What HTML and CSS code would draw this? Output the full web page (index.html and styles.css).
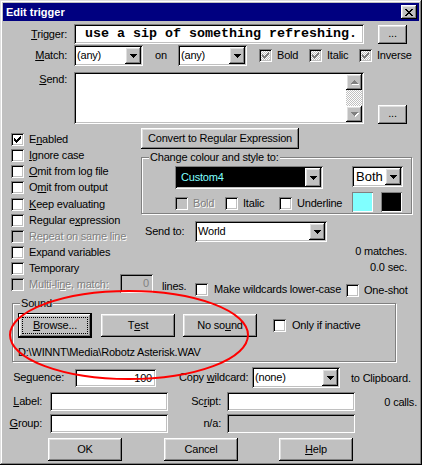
FILE: index.html
```html
<!DOCTYPE html>
<html>
<head>
<meta charset="utf-8">
<title>Edit trigger</title>
<link rel="stylesheet" href="styles.css">
</head>
<body>
<div class="win">
  <div class="titlebar">
    <span class="title">Edit trigger</span>
    <span class="closebtn raised"><svg width="8" height="7" viewBox="0 0 8 7" shape-rendering="crispEdges"><path d="M0 0h2v1h-2z M6 0h2v1h-2z M1 1h2v1h-2z M5 1h2v1h-2z M2 2h4v1h-4z M3 3h2v1h-2z M2 4h4v1h-4z M1 5h2v1h-2z M5 5h2v1h-2z M0 6h2v1h-2z M6 6h2v1h-2z" fill="#000"/></svg></span>
  </div>

  <div class="content">
    <div class="row r-trig">
      <span class="lbl lc67"><u>T</u>rigger:</span>
      <div class="field trig">use a sip of something refreshing.</div>
      <div class="btn raised dots">...</div>
    </div>

    <div class="row r-match">
      <span class="lbl lc67"><u>M</u>atch:</span>
      <div class="combo w69 ml7"><span class="ctext">(any)</span><span class="dd raised"><svg width="7" height="4" viewBox="0 0 7 4" shape-rendering="crispEdges"><path d="M0 0h7v1h-7z M1 1h5v1h-5z M2 2h3v1h-3z M3 3h1v1h-1z"/></svg></span></div>
      <span class="on">on</span>
      <div class="combo w69"><span class="ctext">(any)</span><span class="dd raised"><svg width="7" height="4" viewBox="0 0 7 4" shape-rendering="crispEdges"><path d="M0 0h7v1h-7z M1 1h5v1h-5z M2 2h3v1h-3z M3 3h1v1h-1z"/></svg></span></div>
      <span class="chk ck-bold"><span class="cb ind"><svg width="7" height="7" viewBox="0 0 7 7" shape-rendering="crispEdges"><path fill="#808080" d="M6 0h1v1h-1z M5 1h2v1h-2z M0 2h1v1h-1z M4 2h3v1h-3z M0 3h2v1h-2z M3 3h3v1h-3z M0 4h5v1h-5z M1 5h3v1h-3z M2 6h1v1h-1z"/></svg></span><span class="ct">Bold</span></span>
      <span class="chk ck-italic"><span class="cb ind"><svg width="7" height="7" viewBox="0 0 7 7" shape-rendering="crispEdges"><path fill="#808080" d="M6 0h1v1h-1z M5 1h2v1h-2z M0 2h1v1h-1z M4 2h3v1h-3z M0 3h2v1h-2z M3 3h3v1h-3z M0 4h5v1h-5z M1 5h3v1h-3z M2 6h1v1h-1z"/></svg></span><span class="ct">Italic</span></span>
      <span class="chk"><span class="cb ind"><svg width="7" height="7" viewBox="0 0 7 7" shape-rendering="crispEdges"><path fill="#808080" d="M6 0h1v1h-1z M5 1h2v1h-2z M0 2h1v1h-1z M4 2h3v1h-3z M0 3h2v1h-2z M3 3h3v1h-3z M0 4h5v1h-5z M1 5h3v1h-3z M2 6h1v1h-1z"/></svg></span><span class="ct">Inverse</span></span>
    </div>

    <div class="row r-send">
      <span class="lbl lc67 top"><u>S</u>end:</span>
      <div class="field send">
        <div class="sb">
          <span class="sbtn raised"><svg width="8" height="5" viewBox="0 0 8 5" shape-rendering="crispEdges"><path fill="#fff" d="M4 1h1v1h-1z M3 2h3v1h-3z M2 3h5v1h-5z M1 4h7v1h-7z"/><path fill="#808080" d="M3 0h1v1h-1z M2 1h3v1h-3z M1 2h5v1h-5z M0 3h7v1h-7z"/></svg></span>
          <span class="track"></span>
          <span class="sbtn raised"><svg width="8" height="5" viewBox="0 0 8 5" shape-rendering="crispEdges"><path fill="#fff" d="M1 1h7v1h-7z M2 2h5v1h-5z M3 3h3v1h-3z M4 4h1v1h-1z"/><path fill="#808080" d="M0 0h7v1h-7z M1 1h5v1h-5z M2 2h3v1h-3z M3 3h1v1h-1z"/></svg></span>
        </div>
      </div>
      <div class="btn raised dots bottom">...</div>
    </div>

    <div class="mid">
      <div class="leftcol">
        <div class="crow"><span class="cb"><svg width="7" height="7" viewBox="0 0 7 7" shape-rendering="crispEdges"><path d="M6 0h1v1h-1z M5 1h2v1h-2z M0 2h1v1h-1z M4 2h3v1h-3z M0 3h2v1h-2z M3 3h3v1h-3z M0 4h5v1h-5z M1 5h3v1h-3z M2 6h1v1h-1z"/></svg></span><span class="ct">E<u>n</u>abled</span></div>
        <div class="crow"><span class="cb"></span><span class="ct"><u>I</u>gnore case</span></div>
        <div class="crow"><span class="cb"></span><span class="ct"><u>O</u>mit from log file</span></div>
        <div class="crow h17"><span class="cb"></span><span class="ct">O<u>m</u>it from output</span></div>
        <div class="crow"><span class="cb"></span><span class="ct"><u>K</u>eep evaluating</span></div>
        <div class="crow"><span class="cb"></span><span class="ct">Regular e<u>x</u>pression</span></div>
        <div class="crow"><span class="cb dis"></span><span class="ct dtext">Repeat on same line</span></div>
        <div class="crow"><span class="cb"></span><span class="ct">Expand variables</span></div>
        <div class="crow last"><span class="cb"></span><span class="ct">Temporary</span></div>
      </div>

      <div class="rightcol">
        <div class="btn raised convert">Convert to Regular Expression</div>
        <div class="group colgroup">
          <span class="legend">Change colour and style to:</span>
          <div class="grow ga">
            <div class="combo blk w148 ml33"><span class="ctext cyan">Custom4</span><span class="dd raised"><svg width="7" height="4" viewBox="0 0 7 4" shape-rendering="crispEdges"><path d="M0 0h7v1h-7z M1 1h5v1h-5z M2 2h3v1h-3z M3 3h1v1h-1z"/></svg></span></div>
            <div class="combo w51 ml29"><span class="ctext big">Both</span><span class="dd raised"><svg width="7" height="4" viewBox="0 0 7 4" shape-rendering="crispEdges"><path d="M0 0h7v1h-7z M1 1h5v1h-5z M2 2h3v1h-3z M3 3h1v1h-1z"/></svg></span></div>
          </div>
          <div class="grow gb">
            <span class="chk2 w50 ml33"><span class="cb dis"></span><span class="ct dtext">Bold</span></span>
            <span class="chk2 w54"><span class="cb"></span><span class="ct">Italic</span></span>
            <span class="chk2 w73"><span class="cb"></span><span class="ct">Underline</span></span>
            <span class="swatch sw-cyan"></span>
            <span class="swatch sw-black"></span>
          </div>
        </div>
        <div class="sendto">
          <span class="lbl st-lbl">Send to:</span>
          <div class="combo w132"><span class="ctext">World</span><span class="dd raised"><svg width="7" height="4" viewBox="0 0 7 4" shape-rendering="crispEdges"><path d="M0 0h7v1h-7z M1 1h5v1h-5z M2 2h3v1h-3z M3 3h1v1h-1z"/></svg></span></div>
        </div>
        <div class="stat s1">0 matches.</div>
        <div class="stat s2">0.0 sec.</div>
      </div>
    </div>

    <div class="row r-multi">
      <span class="ml-item"><span class="cb dis"></span><span class="ct dtext">Multi-li<u>n</u>e, match:</span></span>
      <div class="field disabled mlbox">0</div>
      <span class="lines">lines.</span>
      <span class="cb cb-lower"></span><span class="ct lower">Make wildcards lower-case</span>
      <span class="cb cb-one"></span><span class="ct one">One-shot</span>
    </div>

    <div class="group soundgroup">
      <span class="legend">Sound</span>
      <div class="grow sbtns">
        <div class="btn def browse"><span class="focus"><u>B</u>rowse...</span></div>
        <div class="btn raised sbtn74">T<u>e</u>st</div>
        <div class="btn raised sbtn74">No so<u>u</u>nd</div>
        <span class="cb cb-inact"></span><span class="ct">Only if inactive</span>
      </div>
      <div class="path">D:\WINNT\Media\Robotz Asterisk.WAV</div>
    </div>

    <div class="row r-seq">
      <span class="lbl lc64">Se<u>q</u>uence:</span>
      <div class="field seqbox">100</div>
      <span class="lbl cw-lbl">Copy <u>w</u>ildcard:</span>
      <div class="combo w88"><span class="ctext">(none)</span><span class="dd raised"><svg width="7" height="4" viewBox="0 0 7 4" shape-rendering="crispEdges"><path d="M0 0h7v1h-7z M1 1h5v1h-5z M2 2h3v1h-3z M3 3h1v1h-1z"/></svg></span></div>
      <span class="clip">to Clipboard.</span>
    </div>

    <div class="row r-label">
      <span class="lbl lc42"><u>L</u>abel:</span>
      <div class="field tb118"></div>
      <span class="lbl lc53">Sc<u>r</u>ipt:</span>
      <div class="field tb128"></div>
      <span class="calls">0 calls.</span>
    </div>

    <div class="row r-group">
      <span class="lbl lc42"><u>G</u>roup:</span>
      <div class="field tb118"></div>
      <span class="lbl lc53">n/a:</span>
      <div class="field disabled tb128"></div>
    </div>

    <div class="row r-buttons">
      <div class="btn raised b74 ok">OK</div>
      <div class="btn raised b74 cancel">Cancel</div>
      <div class="btn raised b74 help"><u>H</u>elp</div>
    </div>
  </div>

  <svg class="annot" width="422" height="465" viewBox="0 0 422 465"><ellipse cx="129" cy="335" rx="119" ry="44" fill="none" stroke="#ff0000" stroke-width="2"/></svg>
</div>
</body>
</html>
```

FILE: styles.css
```css
* { box-sizing: border-box; }
html, body { margin: 0; padding: 0; }
body {
  width: 422px; height: 465px; overflow: hidden;
  background: #c0c0c0;
  font-family: "Liberation Sans", Arial, sans-serif;
  font-size: 11px; letter-spacing: -0.2px; color: #000;
}
u { text-decoration: underline; text-underline-offset: 1px; }

.win {
  position: relative; width: 422px; height: 465px; background: #c0c0c0;
  box-shadow: inset -1px -1px #000, inset 1px 1px #dfdfdf, inset -2px -2px #808080, inset 2px 2px #fff;
  display: flex; flex-direction: column;
}
.titlebar {
  margin: 3px 3px 0 3px; height: 18px; background: #000080; color: #fff;
  display: flex; align-items: center; justify-content: space-between;
  font-weight: bold; letter-spacing: 0;
}
.title { padding-left: 3px; line-height: 18px; }
.closebtn { width: 16px; height: 14px; margin-right: 2px; display: flex; align-items: center; justify-content: center; }

.raised {
  background: #c0c0c0;
  box-shadow: inset -1px -1px #000, inset 1px 1px #fff, inset -2px -2px #808080, inset 2px 2px #dfdfdf;
}
.field {
  background: #fff;
  box-shadow: inset 1px 1px #808080, inset -1px -1px #fff, inset 2px 2px #000, inset -2px -2px #c0c0c0;
}
.field.disabled { background: #c0c0c0; }

.content { display: flex; flex-direction: column; }
.row { display: flex; align-items: center; }
.lbl { line-height: 13px; white-space: nowrap; }
.lc67 { width: 67px; text-align: right; }
.lc64 { width: 64px; text-align: right; }
.lc42 { width: 42px; text-align: right; }
.lc53 { width: 53px; text-align: right; }
.top { align-self: flex-start; margin-top: 0; }
.ml7 { margin-left: 7px; }
.ml29 { margin-left: 29px; }
.ml33 { margin-left: 33px; }

.btn { display: flex; align-items: center; justify-content: center; white-space: nowrap; line-height: 13px; }

/* trigger */
.r-trig { margin-top: 3px; height: 20px; }
.trig {
  margin-left: 7px; width: 290px; height: 20px; padding-left: 11px;
  font-family: "Liberation Mono", "Courier New", monospace; font-weight: bold; font-size: 13.34px; letter-spacing: 0;
  line-height: 20px; white-space: nowrap; overflow: hidden;
}
.dots { margin-left: 14px; width: 29px; height: 19px; align-self: flex-start; margin-top: 1px; padding-bottom: 2px; }
.dots.bottom { align-self: flex-end; margin-top: 0; }

/* combos */
.combo { display: flex; height: 21px; padding: 2px; background: #fff;
  box-shadow: inset 1px 1px #808080, inset -1px -1px #fff, inset 2px 2px #000, inset -2px -2px #c0c0c0; }
.ctext { flex: 1; padding-left: 1px; line-height: 17px; white-space: nowrap; overflow: hidden; }
.dd { width: 16px; display: flex; align-items: center; justify-content: center; padding-top: 1px; }
.w69 { width: 69px; }
.w51 { width: 51px; }
.w88 { width: 88px; }
.w132 { width: 132px; }
.w148 { width: 148px; height: 23px; }
.combo.blk { background: #000; }
.cyan { color: #80ffff; line-height: 19px; padding-left: 4px; }
.big { font-size: 13px; letter-spacing: 0; padding-left: 2px; }

/* match row */
.r-match { margin-top: 1px; height: 21px; }
.on { width: 35px; padding-left: 12px; line-height: 13px; }
.chk { display: flex; align-items: center; }
.ck-bold { margin-left: 12px; width: 50px; }
.ck-italic { width: 50px; }
.cb {
  width: 13px; height: 13px; flex: none; background: #fff;
  box-shadow: inset 1px 1px #808080, inset -1px -1px #fff, inset 2px 2px #000, inset -2px -2px #c0c0c0;
  display: flex; padding: 3px;
}
.cb.dis { background: #c0c0c0; }
.cb.ind { background: repeating-conic-gradient(#fff 0 25%, #c0c0c0 0 50%) 0 0 / 2px 2px; }
.chk .ct { margin-left: 5px; line-height: 13px; }
.dtext { color: #808080; text-shadow: 1px 1px 0 #fff; }

/* send */
.r-send { margin-top: 6px; height: 52px; align-items: flex-start; }
.r-send .lbl { margin-top: 1px; }
.send { margin-left: 7px; width: 290px; height: 52px; padding: 2px; display: flex; justify-content: flex-end; }
.sb { width: 16px; display: flex; flex-direction: column; }
.sbtn { width: 16px; height: 16px; display: flex; align-items: center; justify-content: center; padding-left: 1px; }
.track { flex: 1; background: repeating-conic-gradient(#fff 0 25%, #c0c0c0 0 50%) 0 0 / 2px 2px; }

/* middle section */
.mid { margin-top: 4px; height: 146px; display: flex; }
.leftcol { width: 141px; padding-left: 11px; padding-top: 4px; display: flex; flex-direction: column; }
.crow { height: 16px; display: flex; align-items: flex-start; white-space: nowrap; }
.crow.h17 { height: 17px; }
.crow.last { height: 13px; }
.crow .cb { margin-top: 1px; }
.crow .ct { margin-left: 5px; line-height: 14px; }
.rightcol { width: 271px; display: flex; flex-direction: column; }
.convert { width: 158px; height: 22px; }

.group {
  border: 1px solid #808080;
  box-shadow: inset 1px 1px #fff, 1px 1px #fff;
  display: flex; flex-direction: column;
}
.legend { align-self: flex-start; margin-top: -7px; margin-left: 7px; padding: 0 1px; background: #c0c0c0; line-height: 13px; white-space: nowrap; }
.colgroup { margin-top: 8px; height: 60px; width: 271px; }
.grow { display: flex; }
.ga { margin-top: 2px; align-items: flex-start; }
.gb { margin-top: 3px; height: 20px; align-items: flex-start; }
.chk2 { display: flex; align-items: flex-start; }
.chk2 .cb { margin-top: 5px; }
.chk2 .ct { margin-left: 5px; margin-top: 4px; line-height: 14px; }
.w50 { width: 50px; }
.w54 { width: 54px; }
.w73 { width: 73px; }
.swatch { width: 21px; height: 20px;
  box-shadow: inset 1px 1px #808080, inset -1px -1px #fff; }
.sw-cyan { background: #80ffff; }
.sw-black { background: #000; margin-left: 8px; }

.sendto { margin-top: 7px; display: flex; align-items: center; height: 21px; }
.st-lbl { margin-left: 4px; width: 50px; }
.stat { text-align: right; padding-right: 5px; line-height: 13px; white-space: nowrap; }
.s1 { margin-top: 3px; }
.s2 { margin-top: 3px; }

/* multi-line row */
.r-multi { height: 23px; align-items: flex-start; white-space: nowrap; }
.ml-item { display: flex; align-items: flex-start; width: 120px; padding-left: 11px; }
.ml-item .cb { margin-top: 4px; }
.ml-item .ct { margin-left: 5px; margin-top: 3px; line-height: 14px; }
.mlbox { width: 33px; height: 19px; text-align: right; padding-right: 4px; line-height: 19px; color: #808080; }
.lines { width: 42px; padding-left: 9px; margin-top: 5px; line-height: 14px; }
.cb-lower { margin-top: 9px; }
.lower { width: 138px; padding-left: 6px; margin-top: 8px; line-height: 14px; }
.cb-one { margin-top: 10px; }
.one { margin-left: 5px; margin-top: 9px; line-height: 14px; }

/* sound */
.soundgroup { margin-top: 6px; margin-left: 12px; width: 384px; height: 59px; }
.sbtns { margin-top: 3px; align-items: center; height: 25px; }
.browse { margin-left: 5px; width: 74px; height: 25px; background: #c0c0c0; padding: 4px;
  box-shadow: inset 0 0 0 1px #000, inset -2px -2px #000, inset 2px 2px #fff, inset -3px -3px #808080, inset 3px 3px #dfdfdf; }
.focus { flex: 1; align-self: stretch; border: 1px dotted #000; display: flex; align-items: center; justify-content: center; }
.sbtn74 { width: 74px; height: 23px; margin-left: 9px; }
.sbtn74 + .sbtn74 { margin-left: 8px; }
.cb-inact { margin-left: 16px; }
.sbtns .ct { margin-left: 6px; line-height: 13px; white-space: nowrap; }
.path { margin-top: 8px; margin-left: 5px; line-height: 13px; white-space: nowrap; }

/* bottom rows */
.r-seq { margin-top: 5px; height: 21px; }
.seqbox { margin-left: 11px; width: 81px; height: 18px; text-align: right; padding-right: 4px; line-height: 18px; }
.cw-lbl { margin-left: 23px; width: 73px; }
.clip { margin-left: 11px; white-space: nowrap; }
.r-label { margin-top: 4px; height: 19px; }
.r-group { margin-top: 3px; height: 19px; }
.tb118 { margin-left: 8px; width: 118px; height: 19px; }
.tb128 { margin-left: 6px; width: 128px; height: 19px; }
.calls { flex: 1; text-align: right; padding-right: 5px; white-space: nowrap; }
.r-buttons { margin-top: 5px; height: 23px; }
.b74 { width: 74px; height: 23px; }
.ok { margin-left: 48px; }
.cancel { margin-left: 42px; }
.help { margin-left: 41px; }

.annot { position: absolute; left: 0; top: 0; pointer-events: none; }
```
